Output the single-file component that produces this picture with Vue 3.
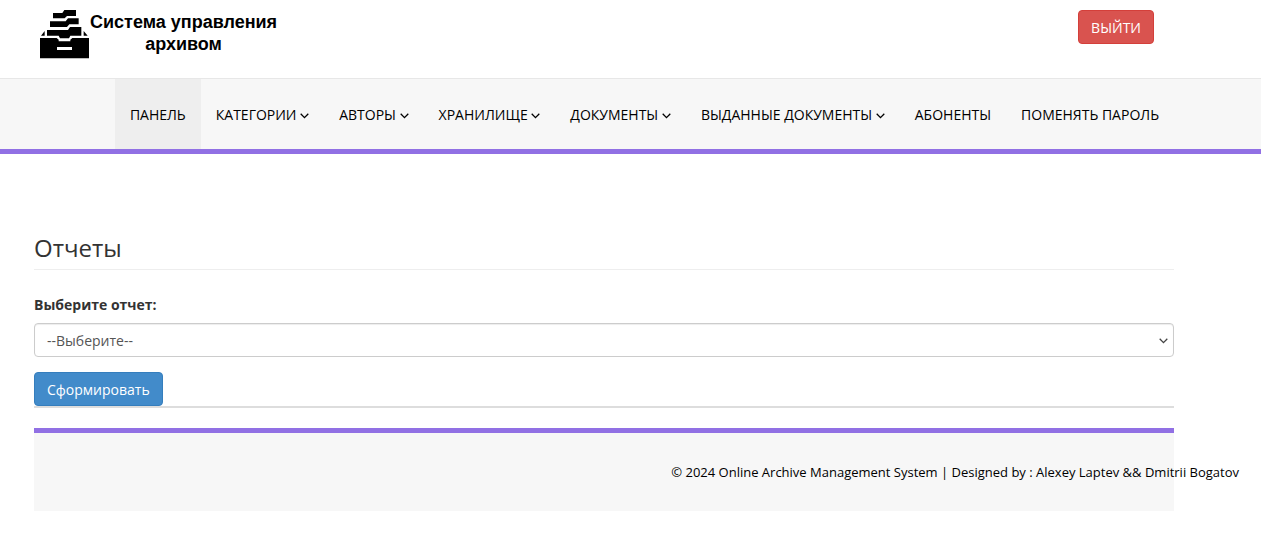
<script setup>
import { ref } from 'vue'

const report = ref('')
const items = [
  { label: 'Панель', active: true },
  { label: 'Категории', menu: true },
  { label: 'Авторы', menu: true },
  { label: 'Хранилище', menu: true },
  { label: 'Документы', menu: true },
  { label: 'Выданные документы', menu: true },
  { label: 'Абоненты' },
  { label: 'Поменять пароль' },
]
</script>

<template>
  <div class="page">
    <header class="header">
      <a class="brand" href="#">
        <svg class="logo" viewBox="15 15 147 147" aria-hidden="true">
          <path d="M54 24H82L88 15H123V33H96L89 40H54Z" />
          <path d="M45 49H92L99 40H131V58H103L96 66H45Z" />
          <path d="M36 75H99L105 66H139V92H106L102 100H75L71 92H36Z" />
          <path d="M29 78V92H18Z M146 78V92H158Z" />
          <path d="M15 99H65L71 104V109H106V104L112 99H162V160H15Z M66 126V135H111V126Z" fill-rule="evenodd" />
        </svg>
        <span class="brand-name">Система управления<br>архивом</span>
      </a>
      <button type="button" class="btn danger">ВЫЙТИ</button>
    </header>

    <nav class="nav">
      <ul class="menu">
        <li v-for="item in items" :key="item.label">
          <a href="#" class="link" :class="{ active: item.active }">
            {{ item.label }}
            <svg v-if="item.menu" class="chevron" viewBox="0 0 9 6" aria-hidden="true">
              <path d="M0.700 0.800L4.500 4.600L8.300 0.800" />
            </svg>
          </a>
        </li>
      </ul>
    </nav>

    <main class="content">
      <h1 class="title">Отчеты</h1>
      <form class="form" @submit.prevent>
        <label class="label" for="report">Выберите отчет:</label>
        <div class="select-wrap">
          <select id="report" v-model="report" class="select">
            <option value="">--Выберите--</option>
          </select>
          <svg class="chevron arrow" viewBox="0 0 9 6" aria-hidden="true">
            <path d="M0.700 0.800L4.500 4.600L8.300 0.800" />
          </svg>
        </div>
        <button type="submit" class="btn primary">Сформировать</button>
      </form>
    </main>

    <footer class="footer">
      <p class="copyright">© 2024 Online Archive Management System | Designed by : Alexey Laptev &amp;&amp; Dmitrii Bogatov</p>
    </footer>
  </div>
</template>

<style>
body {
  margin: 0;
  background: #fff;
}
</style>

<style scoped>
* {
  box-sizing: border-box;
}
.page {
  font: 14px/20px "Open Sans", "Noto Sans", sans-serif;
  color: #333;
  overflow-x: clip;
}
.header,
.menu,
.content,
.footer {
  max-width: 1140px;
  margin: 0 34px;
}
.header {
  display: flex;
  justify-content: space-between;
  align-items: flex-start;
  padding: 10px 20px 19px 6px;
}
.brand {
  display: flex;
  gap: 1px;
  color: #000;
  text-decoration: none;
}
.logo {
  width: 49px;
  height: 49px;
}
.brand-name {
  padding-top: 1px;
  font: bold 18px/22px "Liberation Sans", Arial, sans-serif;
  text-align: center;
}
.btn {
  font: inherit;
  color: #fff;
  padding: 7px 12px 5px;
  border: 1px solid;
  border-radius: 4px;
  cursor: pointer;
}
.danger {
  background: #d9534f;
  border-color: #d43f3a;
}
.primary {
  background: #428bca;
  border-color: #357ebd;
}
.nav {
  background: #f7f7f7;
  border-top: 1px solid #e7e7e7;
  border-bottom: 5px solid #9170e4;
}
.menu {
  display: flex;
  justify-content: flex-end;
  padding: 0;
  list-style: none;
}
.link {
  display: block;
  padding: 26px 15px 24px;
  color: #000;
  text-transform: uppercase;
  text-decoration: none;
  white-space: nowrap;
}
.active {
  background: #eee;
}
.chevron {
  width: 9px;
  height: 6px;
  fill: none;
  stroke: currentColor;
  stroke-width: 1.3;
}
.link .chevron {
  vertical-align: 1px;
}
.content {
  padding-top: 80px;
}
.title {
  margin: 0 0 25px;
  padding-bottom: 7px;
  border-bottom: 1px solid #eee;
  font-size: 24px;
  line-height: 28px;
  font-weight: 400;
}
.form {
  border-bottom: 2px solid #ddd;
}
.label {
  display: block;
  margin-bottom: 8px;
  font-weight: 700;
}
.select-wrap {
  position: relative;
  margin-bottom: 15px;
}
.select {
  display: block;
  width: 100%;
  height: 34px;
  padding: 7px 12px 5px;
  border: 1px solid #ccc;
  border-radius: 4px;
  background: #fff;
  box-shadow: inset 0 1px 1px rgba(0, 0, 0, 0.075);
  color: #555;
  font: inherit;
  appearance: none;
}
.arrow {
  position: absolute;
  right: 6px;
  top: 15px;
  color: #444;
  pointer-events: none;
}
.form .btn {
  display: block;
}
.footer {
  display: flex;
  justify-content: flex-end;
  margin-top: 20px;
  padding: 29px 0;
  background: #f7f7f7;
  border-top: 5px solid #9170e4;
}
.copyright {
  margin: 0 -65px 0 0;
  font-size: 13px;
  color: #000;
  white-space: nowrap;
}
</style>
